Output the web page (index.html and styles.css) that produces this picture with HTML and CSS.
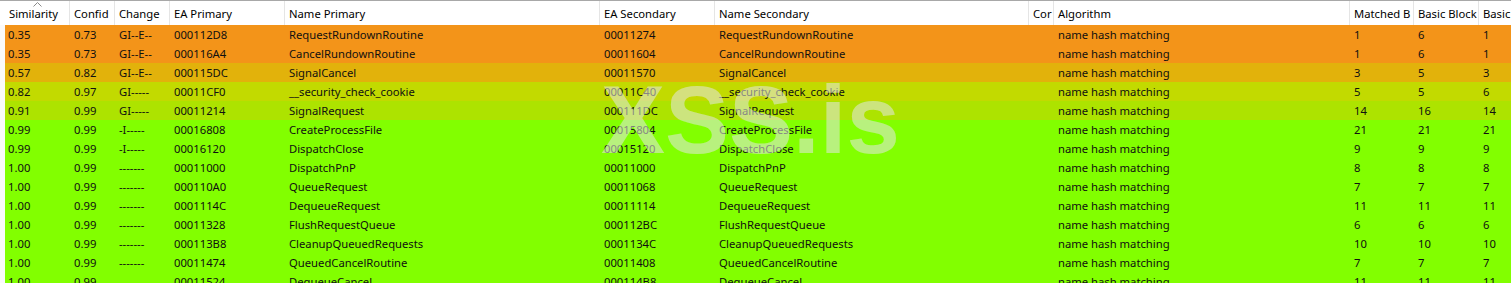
FILE: index.html
```html
<!DOCTYPE html>
<html>
<head>
<meta charset="utf-8">
<link rel="stylesheet" href="styles.css">
</head>
<body>
<div class="table">
  <div class="head">
    <div class="hc first">Similarity<svg class="sort" width="9" height="5" viewBox="0 0 9 5"><polyline points="0.5,4.5 4.5,0.5 8.5,4.5" fill="none" stroke="#8a8a8a" stroke-width="1"/></svg></div>
    <div class="hc">Confid</div>
    <div class="hc">Change</div>
    <div class="hc">EA Primary</div>
    <div class="hc">Name Primary</div>
    <div class="hc">EA Secondary</div>
    <div class="hc">Name Secondary</div>
    <div class="hc">Cor</div>
    <div class="hc">Algorithm</div>
    <div class="hc">Matched B</div>
    <div class="hc">Basic Block</div>
    <div class="hc">Basic Block</div>
  </div>
  <div class="body">
    <div class="row c-orange"><span>0.35</span><span>0.73</span><span>GI--E--</span><span>000112D8</span><span>RequestRundownRoutine</span><span>00011274</span><span>RequestRundownRoutine</span><span></span><span>name hash matching</span><span>1</span><span>6</span><span>1</span></div>
    <div class="row c-orange"><span>0.35</span><span>0.73</span><span>GI--E--</span><span>000116A4</span><span>CancelRundownRoutine</span><span>00011604</span><span>CancelRundownRoutine</span><span></span><span>name hash matching</span><span>1</span><span>6</span><span>1</span></div>
    <div class="row c-gold"><span>0.57</span><span>0.82</span><span>GI--E--</span><span>000115DC</span><span>SignalCancel</span><span>00011570</span><span>SignalCancel</span><span></span><span>name hash matching</span><span>3</span><span>5</span><span>3</span></div>
    <div class="row c-lime"><span>0.82</span><span>0.97</span><span>GI-----</span><span>00011CF0</span><span>__security_check_cookie</span><span>00011C40</span><span>__security_check_cookie</span><span></span><span>name hash matching</span><span>5</span><span>5</span><span>6</span></div>
    <div class="row c-yg"><span>0.91</span><span>0.99</span><span>GI-----</span><span>00011214</span><span>SignalRequest</span><span>000111DC</span><span>SignalRequest</span><span></span><span>name hash matching</span><span>14</span><span>16</span><span>14</span></div>
    <div class="row c-green"><span>0.99</span><span>0.99</span><span>-I-----</span><span>00016808</span><span>CreateProcessFile</span><span>00015804</span><span>CreateProcessFile</span><span></span><span>name hash matching</span><span>21</span><span>21</span><span>21</span></div>
    <div class="row c-green"><span>0.99</span><span>0.99</span><span>-I-----</span><span>00016120</span><span>DispatchClose</span><span>00015120</span><span>DispatchClose</span><span></span><span>name hash matching</span><span>9</span><span>9</span><span>9</span></div>
    <div class="row c-green"><span>1.00</span><span>0.99</span><span>-------</span><span>00011000</span><span>DispatchPnP</span><span>00011000</span><span>DispatchPnP</span><span></span><span>name hash matching</span><span>8</span><span>8</span><span>8</span></div>
    <div class="row c-green"><span>1.00</span><span>0.99</span><span>-------</span><span>000110A0</span><span>QueueRequest</span><span>00011068</span><span>QueueRequest</span><span></span><span>name hash matching</span><span>7</span><span>7</span><span>7</span></div>
    <div class="row c-green"><span>1.00</span><span>0.99</span><span>-------</span><span>0001114C</span><span>DequeueRequest</span><span>00011114</span><span>DequeueRequest</span><span></span><span>name hash matching</span><span>11</span><span>11</span><span>11</span></div>
    <div class="row c-green"><span>1.00</span><span>0.99</span><span>-------</span><span>00011328</span><span>FlushRequestQueue</span><span>000112BC</span><span>FlushRequestQueue</span><span></span><span>name hash matching</span><span>6</span><span>6</span><span>6</span></div>
    <div class="row c-green"><span>1.00</span><span>0.99</span><span>-------</span><span>000113B8</span><span>CleanupQueuedRequests</span><span>0001134C</span><span>CleanupQueuedRequests</span><span></span><span>name hash matching</span><span>10</span><span>10</span><span>10</span></div>
    <div class="row c-green"><span>1.00</span><span>0.99</span><span>-------</span><span>00011474</span><span>QueuedCancelRoutine</span><span>00011408</span><span>QueuedCancelRoutine</span><span></span><span>name hash matching</span><span>7</span><span>7</span><span>7</span></div>
    <div class="row c-green"><span>1.00</span><span>0.99</span><span>-------</span><span>00011524</span><span>DequeueCancel</span><span>000114B8</span><span>DequeueCancel</span><span></span><span>name hash matching</span><span>11</span><span>11</span><span>11</span></div>
  </div>
  <div class="watermark">XSS.is</div>
</div>
</body>
</html>
```
FILE: styles.css
```css
html, body {
  margin: 0;
  padding: 0;
  width: 1511px;
  height: 283px;
  overflow: hidden;
  background: #ffffff;
}
.table {
  position: relative;
  width: 1511px;
  height: 283px;
  overflow: hidden;
  font-family: "Noto Sans", "Open Sans", sans-serif;
  font-size: 11.25px;
  color: #101010;
  border-top: 1px solid #a8a8a8;
  box-sizing: border-box;
}
.head {
  display: grid;
  grid-template-columns: 70px 45px 55px 115px 315px 115px 314px 25px 296px 64px 65px 65px;
  height: 24px;
  background: #ffffff;
}
.hc {
  position: relative;
  display: flex;
  align-items: center;
  padding-left: 4px;
  padding-top: 1px;
  border-right: 1px solid #e5e5e5;
  white-space: nowrap;
  overflow: hidden;
  color: #000;
}
.hc.first {
  padding-left: 9px;
}
.sort {
  position: absolute;
  left: 33px;
  top: 1px;
}
.body {
  padding-left: 5px;
  background: #fafafa;
}
.row {
  display: grid;
  grid-template-columns: 65px 45px 55px 115px 315px 115px 314px 25px 296px 64px 65px 65px;
  height: 19px;
  align-items: center;
}
.row span {
  padding-left: 4px;
  white-space: nowrap;
  overflow: hidden;
}
.row span:first-child {
  padding-left: 3px;
}
.c-orange { background: #f39419; }
.c-gold { background: #e2b20b; }
.c-lime { background: #c2da00; }
.c-yg { background: #ade300; }
.c-green { background: #82ff00; }
.watermark {
  position: absolute;
  left: 601px;
  top: 64px;
  font-family: "Liberation Sans", Arial, sans-serif;
  font-weight: bold;
  font-size: 96px;
  line-height: 110px;
  color: rgba(230, 230, 230, 0.55);
  pointer-events: none;
}
```
